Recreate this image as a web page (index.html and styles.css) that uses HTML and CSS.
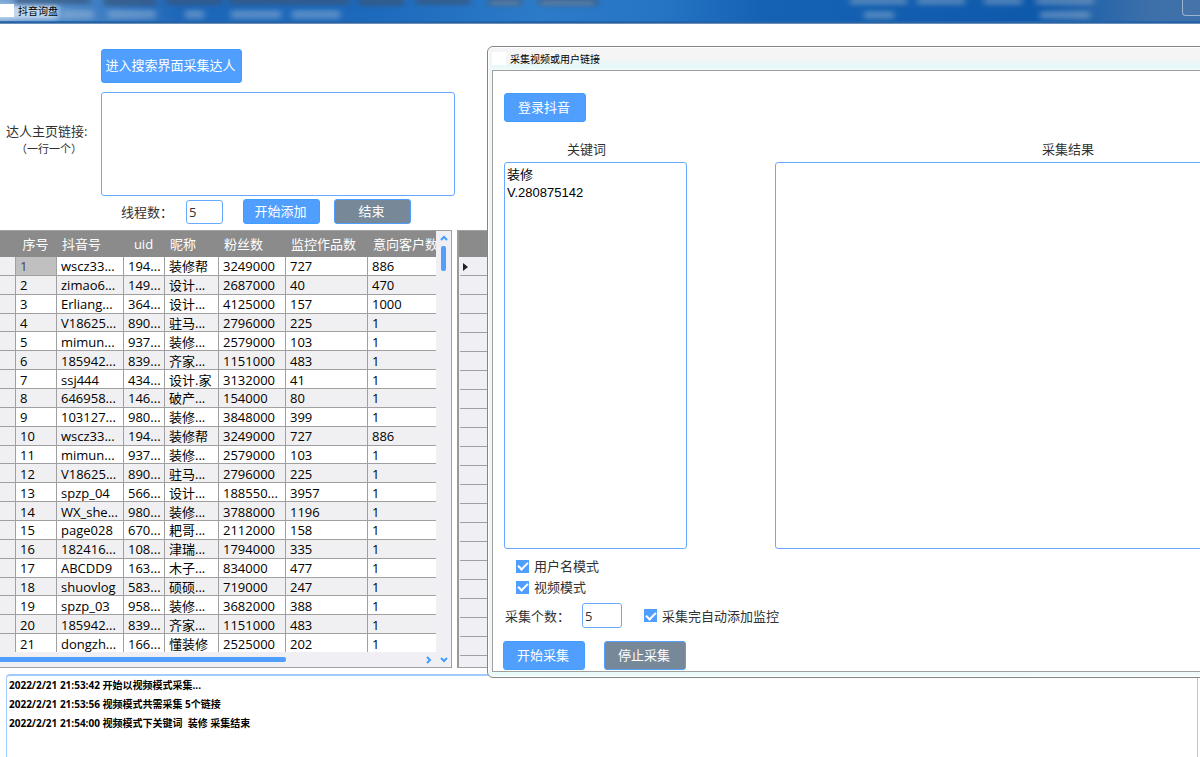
FILE: index.html
```html
<!DOCTYPE html>
<html lang="zh-CN">
<head>
<meta charset="utf-8">
<title>抖音询盘</title>
<link rel="stylesheet" href="styles.css">
</head>
<body>
<div class="window">
  <header class="titlebar">
    <svg class="desktop" aria-hidden="true">
      <defs>
        <filter id="soft" x="-20%" y="-60%" width="140%" height="220%"><feGaussianBlur stdDeviation="3 2"/></filter>
      </defs>
      <g filter="url(#soft)" fill="#b9cbd9" fill-opacity=".35">
        <rect x="-10" y="5" width="68" height="14" fill="#d8e6f4" fill-opacity=".8"/>
        <rect x="62" y="10" width="32" height="9"/><rect x="108" y="10" width="48" height="9"/>
        <rect x="185" y="10" width="19" height="9"/><rect x="231" y="10" width="50" height="9"/>
        <rect x="292" y="10" width="48" height="9"/>
        <rect x="864" y="11" width="30" height="8"/><rect x="1040" y="11" width="50" height="8"/>
      </g>
      <g filter="url(#soft)" fill="#34577d" fill-opacity=".75">
        <rect x="15" y="-3" width="75" height="7"/><rect x="104" y="-3" width="52" height="9"/>
        <rect x="166" y="-3" width="56" height="8"/><rect x="229" y="-3" width="120" height="8"/>
        <rect x="358" y="-3" width="46" height="9"/><rect x="416" y="-3" width="54" height="8"/>
        <rect x="488" y="-3" width="34" height="9"/><rect x="538" y="-3" width="60" height="9"/>
      </g>
      <g filter="url(#soft)" fill="#a3b6c9" fill-opacity=".4">
        <rect x="850" y="-3" width="57" height="8"/><rect x="917" y="-3" width="48" height="8"/>
        <rect x="984" y="-3" width="38" height="8"/><rect x="1036" y="-3" width="58" height="8"/>
        <rect x="490" y="1" width="30" height="4"/><rect x="540" y="1" width="54" height="4"/>
      </g>
    </svg>
    <span class="app-icon"></span>
    <h1 class="title">抖音询盘</h1>
    <button class="minimize" type="button" aria-label="最小化"></button>
  </header>

  <form class="form">
    <button class="btn btn-search" type="button">进入搜索界面采集达人</button>
    <label class="links-label" for="links">达人主页链接:<small>（一行一个）</small></label>
    <textarea class="box links" id="links"></textarea>
    <div class="threads">
      <label for="threads">线程数：</label>
      <input class="box threads-input" id="threads" value="5">
      <button class="btn btn-add" type="button">开始添加</button>
      <button class="btn btn-gray btn-end" type="button">结束</button>
    </div>
  </form>

  <main class="grids">
    <section class="panel">
      <table class="data">
        <colgroup><col class="c0"><col class="c1"><col class="c2"><col class="c3"><col class="c4"><col class="c5"><col class="c6"><col></colgroup>
        <thead><tr><th></th><th class="mid">序号</th><th>抖音号</th><th class="mid">uid</th><th>昵称</th><th>粉丝数</th><th>监控作品数</th><th>意向客户数</th></tr></thead>
        <tbody>
        <tr><td></td><td class="current">1</td><td>wscz33...</td><td>194...</td><td>装修帮</td><td>3249000</td><td>727</td><td>886</td></tr>
        <tr><td></td><td>2</td><td>zimao6...</td><td>149...</td><td>设计...</td><td>2687000</td><td>40</td><td>470</td></tr>
        <tr><td></td><td>3</td><td>Erliang...</td><td>364...</td><td>设计...</td><td>4125000</td><td>157</td><td>1000</td></tr>
        <tr><td></td><td>4</td><td>V18625...</td><td>890...</td><td>驻马...</td><td>2796000</td><td>225</td><td>1</td></tr>
        <tr><td></td><td>5</td><td>mimun...</td><td>937...</td><td>装修...</td><td>2579000</td><td>103</td><td>1</td></tr>
        <tr><td></td><td>6</td><td>185942...</td><td>839...</td><td>齐家...</td><td>1151000</td><td>483</td><td>1</td></tr>
        <tr><td></td><td>7</td><td>ssj444</td><td>434...</td><td>设计.家</td><td>3132000</td><td>41</td><td>1</td></tr>
        <tr><td></td><td>8</td><td>646958...</td><td>146...</td><td>破产...</td><td>154000</td><td>80</td><td>1</td></tr>
        <tr><td></td><td>9</td><td>103127...</td><td>980...</td><td>装修...</td><td>3848000</td><td>399</td><td>1</td></tr>
        <tr><td></td><td>10</td><td>wscz33...</td><td>194...</td><td>装修帮</td><td>3249000</td><td>727</td><td>886</td></tr>
        <tr><td></td><td>11</td><td>mimun...</td><td>937...</td><td>装修...</td><td>2579000</td><td>103</td><td>1</td></tr>
        <tr><td></td><td>12</td><td>V18625...</td><td>890...</td><td>驻马...</td><td>2796000</td><td>225</td><td>1</td></tr>
        <tr><td></td><td>13</td><td>spzp_04</td><td>566...</td><td>设计...</td><td>188550...</td><td>3957</td><td>1</td></tr>
        <tr><td></td><td>14</td><td>WX_she...</td><td>980...</td><td>装修...</td><td>3788000</td><td>1196</td><td>1</td></tr>
        <tr><td></td><td>15</td><td>page028</td><td>670...</td><td>耙哥...</td><td>2112000</td><td>158</td><td>1</td></tr>
        <tr><td></td><td>16</td><td>182416...</td><td>108...</td><td>津瑞...</td><td>1794000</td><td>335</td><td>1</td></tr>
        <tr><td></td><td>17</td><td>ABCDD9</td><td>163...</td><td>木子...</td><td>834000</td><td>477</td><td>1</td></tr>
        <tr><td></td><td>18</td><td>shuovlog</td><td>583...</td><td>硕硕...</td><td>719000</td><td>247</td><td>1</td></tr>
        <tr><td></td><td>19</td><td>spzp_03</td><td>958...</td><td>装修...</td><td>3682000</td><td>388</td><td>1</td></tr>
        <tr><td></td><td>20</td><td>185942...</td><td>839...</td><td>齐家...</td><td>1151000</td><td>483</td><td>1</td></tr>
        <tr><td></td><td>21</td><td>dongzh...</td><td>166...</td><td>懂装修</td><td>2525000</td><td>202</td><td>1</td></tr>
        </tbody>
      </table>
      <div class="vscroll">
        <svg width="8" height="6" viewBox="0 0 8 6"><path d="M1 5l3-3 3 3"/></svg>
        <span class="vthumb"></span>
      </div>
      <div class="hscroll">
        <span class="hthumb"></span>
        <svg width="6" height="8" viewBox="0 0 6 8"><path d="M1 1l3 3-3 3"/></svg>
        <svg width="8" height="6" viewBox="0 0 8 6"><path d="M1 1l3 3 3-3"/></svg>
      </div>
    </section>
    <section class="panel side">
      <div class="side-head"></div>
      <div class="side-rows"><svg class="pointer" width="5" height="8" viewBox="0 0 5 8"><path d="M0 0l5 4-5 4z"/></svg></div>
    </section>
  </main>

  <textarea class="log" readonly aria-label="日志">2022/2/21 21:53:42 开始以视频模式采集...
2022/2/21 21:53:56 视频模式共需采集 5个链接
2022/2/21 21:54:00 视频模式下关键词  装修 采集结束</textarea>
</div>

<div class="dialog" role="dialog" aria-labelledby="dlg-title">
  <header class="dialog-bar"><span class="app-icon"></span><h2 class="title" id="dlg-title">采集视频或用户链接</h2></header>
  <form class="dialog-body">
    <button class="btn btn-wide" type="button">登录抖音</button>
    <div class="lists">
      <label class="list-label key-label" for="keys">关键词</label>
      <label class="list-label" for="result">采集结果</label>
      <textarea class="box list" id="keys">装修
V.280875142</textarea>
      <textarea class="box list" id="result"></textarea>
    </div>
    <div class="modes">
      <label class="check"><input type="checkbox" checked>用户名模式</label>
      <label class="check"><input type="checkbox" checked>视频模式</label>
    </div>
    <div class="count">
      <label for="count">采集个数：</label>
      <input class="box count-input" id="count" value="5">
      <label class="check"><input type="checkbox" checked>采集完自动添加监控</label>
    </div>
    <div class="actions">
      <button class="btn btn-wide" type="button">开始采集</button>
      <button class="btn btn-wide btn-gray" type="button">停止采集</button>
    </div>
  </form>
</div>
</body>
</html>
```

FILE: styles.css
```css
* { box-sizing: border-box; }

body {
  margin: 0;
  position: relative;
  overflow: hidden;
  background: #fff;
  color: #303133;
  font: 13px/18px "Open Sans", "Noto Sans CJK SC", sans-serif;
}

button, input, textarea { font: inherit; color: inherit; margin: 0; }
textarea { resize: none; display: block; }

.window { display: flex; flex-direction: column; min-height: 100vh; }

/* title bars */
.titlebar {
  position: relative;
  display: flex;
  align-items: center;
  height: 24px;
  padding-bottom: 2px;
  border-bottom: 1px solid #6a8fb8;
  box-shadow: inset 0 -2px #2463a8;
  background: linear-gradient(90deg, #7ba6d6 0, #4a87c8 70px, #1d66b8 180px, #1c68bb 360px, #2c7bc9 540px, #2674c4 660px, #1562b4 760px, #0f59ab 1040px, #3d70aa 1150px, #3f70a9 100%);
}
.desktop { position: absolute; inset: 0; width: 100%; height: 22px; }
.app-icon { position: relative; width: 14px; height: 13px; background: #fff; }
.title {
  position: relative;
  margin: 0 0 0 4px;
  font-size: 10px;
  font-weight: 400;
  line-height: 14px;
  color: #000;
}
.minimize {
  position: relative;
  align-self: flex-start;
  margin-left: auto;
  width: 18px;
  height: 16px;
  padding: 0;
  background: #4674aa;
  border: 1px solid #9bb4d1;
  border-width: 0 0 1px 1px;
  border-radius: 0 0 0 4px;
}

/* controls */
.btn {
  padding: 0 2px 2px 0;
  border: 1px solid #409eff;
  border-radius: 3px;
  background: #509fff;
  color: #fff;
  text-align: center;
  white-space: nowrap;
}
.btn-gray { background: #778899; border-color: #509fff; }
.btn-wide { width: 82px; height: 29px; }
.btn-search { grid-column: 2; width: 141px; height: 34px; margin-bottom: 9px; }
.btn-add { width: 77px; height: 25px; margin-left: 20px; }
.btn-end { width: 77px; height: 25px; margin-left: 14px; }

.box {
  border: 1px solid #66abff;
  border-radius: 3px;
  background: #fff;
  padding: 3px 2px;
  outline: 0;
}

.form {
  display: grid;
  grid-template-columns: 101px 354px;
  padding: 25px 0 6px;
}
.links-label { align-self: center; padding: 0 0 9px 6px; line-height: 18px; }
.links-label small { display: block; width: 86px; text-align: center; font-size: 11px; }
.links { grid-column: 2; height: 104px; }
.threads { grid-column: 2; display: flex; align-items: center; padding: 3px 0 0 20px; }
.threads-input { width: 37px; height: 24px; margin-left: 13px; }

/* grids */
.grids { display: grid; grid-template-columns: 452px 1fr; column-gap: 5px; }
.panel {
  border: 1px solid #a0a0a0;
  border-left: 0;
  background: #f0f0f4;
  display: grid;
  grid-template-columns: 1fr 15px;
  grid-template-rows: 421px 15px;
}
.data {
  width: 100%;
  height: 421px;
  table-layout: fixed;
  border-collapse: separate;
  border-spacing: 0;
  background: #fff;
  color: #000;
}
.c0 { width: 16px; }
.c1 { width: 41px; }
.c2 { width: 67px; }
.c3 { width: 41px; }
.c4 { width: 54px; }
.c5 { width: 67px; }
.c6 { width: 82px; }
.data th {
  height: 26px;
  padding: 0 0 0 5px;
  background: #8b8b8b;
  color: #fff;
  font-weight: 400;
  text-align: left;
  white-space: nowrap;
  overflow: hidden;
}
.data th.mid { padding: 0 2px 0 0; text-align: center; }
.data td {
  padding: 1px 0 0 4px;
  border-right: 1px solid #a0a0a0;
  border-bottom: 1px solid #a0a0a0;
  line-height: 16px;
  white-space: nowrap;
  overflow: hidden;
}
.data td:last-child { border-right: 0; }
.data tr:last-child td { border-bottom: 0; }
.data tr:nth-child(even) td, .data td:first-child { background: #f0f0f2; }
.data tr .current { background: #c0c0c0; color: #444; }

.vscroll { display: flex; flex-direction: column; align-items: center; gap: 5px; padding-top: 4px; }
.vthumb { width: 5px; height: 25px; border-radius: 2px; background: #509fff; }
.hscroll { grid-column: 1 / -1; display: flex; align-items: center; gap: 8px; padding-right: 3px; }
.hthumb { width: 286px; height: 5px; margin-right: auto; border-radius: 0 2px 2px 0; background: #509fff; }
.vscroll path, .hscroll path { fill: none; stroke: #409eff; stroke-width: 2; }

.side { border-left: 2px solid #9a9a9a; grid-template-columns: 1fr; grid-template-rows: 26px 1fr; }
.side-head { background: #8b8b8b; }
.side-rows {
  margin-left: 1px;
  padding: 6px 3px;
  background: repeating-linear-gradient(#f0f0f4 0, #f0f0f4 18px, #a0a0a0 18px, #a0a0a0 19px);
}
.pointer { display: block; fill: #222; }

.log {
  flex: 1;
  margin: 6px 2px 0 6px;
  padding: 0 2px;
  border: 2px solid #a0cbff;
  border-width: 2px 1px 0 1px;
  border-radius: 4px 4px 0 0;
  outline: 0;
  color: #000;
  font-size: 10px;
  font-weight: 700;
  line-height: 19px;
}

/* collecting dialog, running past the right edge of the screen */
.dialog {
  position: absolute;
  top: 46px;
  left: 487px;
  right: -180px;
  padding: 0 5px 5px 4px;
  border: 1px solid #858585;
  border-radius: 6px;
  background: linear-gradient(90deg, #f4f4f4, #e9fafa 5px, #f2fafa);
  box-shadow: inset 0 0 0 1px #fff;
}
.dialog-bar {
  display: flex;
  align-items: center;
  height: 22px;
  padding-bottom: 1px;
  background: linear-gradient(#f5f5f5 50%, #e6f8f8 80%, #f2fbfb);
  margin-top: 1px;
}
.dialog-body {
  margin: 0;
  padding: 22px 12px 1px 10px;
  border: 1px solid #a0a0a0;
  background: #fff;
}
.dialog-body > .btn { display: block; margin-left: 1px; }
.lists {
  display: grid;
  grid-template-columns: 183px minmax(0, 1fr);
  column-gap: 88px;
  padding: 18px 0 0 1px;
}
.list-label { text-align: center; padding-bottom: 4px; }
.key-label { padding-right: 18px; }
.list { width: 100%; height: 387px; }
#keys { font-family: "Liberation Sans", "Noto Sans CJK SC", sans-serif; color: #000; }
.modes { display: flex; flex-direction: column; align-items: flex-start; gap: 3px; padding: 8px 0 0 13px; }
.check { display: flex; align-items: center; gap: 5px; }
.check input {
  appearance: none;
  display: grid;
  place-items: center;
  width: 13px;
  height: 13px;
  background: #509fff;
}
.check input:checked::after {
  content: "";
  width: 4px;
  height: 8px;
  margin-bottom: 2px;
  border: solid #fff;
  border-width: 0 2px 2px 0;
  transform: rotate(45deg);
}
.count { display: flex; align-items: center; padding: 7px 0 0 2px; }
.count-input { width: 40px; height: 25px; margin: 0 22px 0 12px; }
.actions { display: flex; gap: 19px; padding-top: 13px; }
```
